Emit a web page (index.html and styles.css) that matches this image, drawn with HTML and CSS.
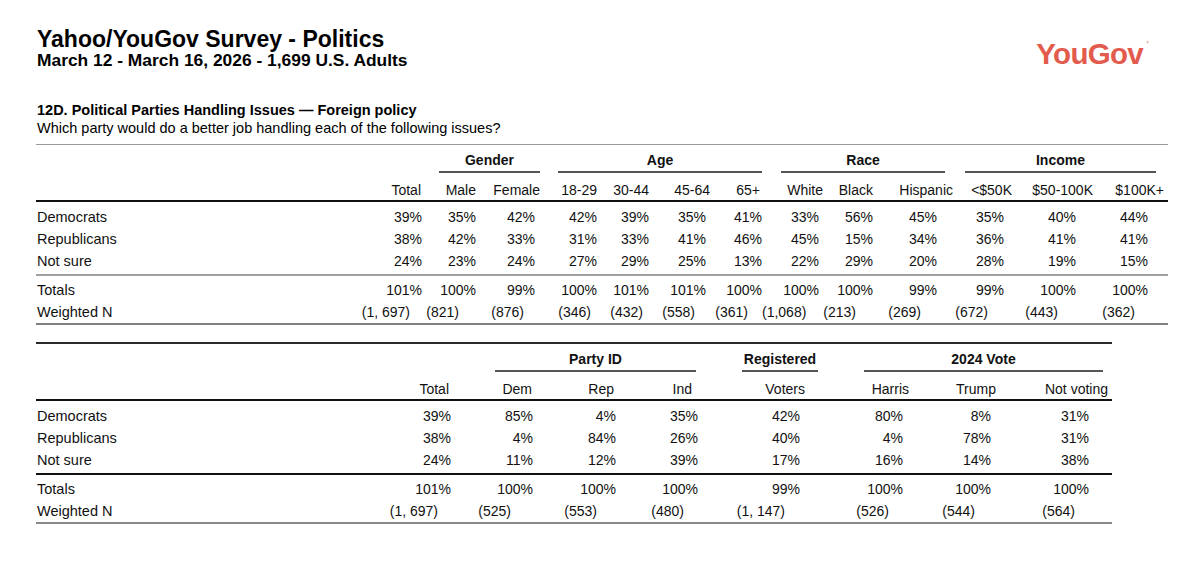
FILE: index.html
```html
<!DOCTYPE html>
<html lang="en">
<head>
<meta charset="utf-8">
<title>Yahoo/YouGov Survey - Politics</title>
<link rel="stylesheet" href="styles.css">
</head>
<body>
<div class="page">
  <header class="top">
    <div class="titles">
      <h1 class="title">Yahoo/YouGov Survey - Politics</h1>
      <h2 class="subtitle">March 12 - March 16, 2026 - 1,699 U.S. Adults</h2>
    </div>
    <div class="logo">YouGov<span class="mark">'</span></div>
  </header>

  <section class="question">
    <h3>12D. Political Parties Handling Issues — Foreign policy</h3>
    <p>Which party would do a better job handling each of the following issues?</p>
  </section>

  <div class="tbl t1">
    <div class="row groups">
      <div class="span2"></div>
      <div class="grp span2 g-gender">Gender</div>
      <div class="grp span4 g-age">Age</div>
      <div class="grp span3 g-race">Race</div>
      <div class="grp span3 g-income">Income</div>
    </div>
    <div class="row hdr">
      <div></div><div>Total</div><div>Male</div><div>Female</div><div>18-29</div><div>30-44</div><div>45-64</div><div>65+</div><div>White</div><div>Black</div><div>Hispanic</div><div>&lt;$50K</div><div>$50-100K</div><div>$100K+</div>
    </div>
    <div class="body">
      <div class="row r"><div>Democrats</div><div>39%</div><div>35%</div><div>42%</div><div>42%</div><div>39%</div><div>35%</div><div>41%</div><div>33%</div><div>56%</div><div>45%</div><div>35%</div><div>40%</div><div>44%</div></div>
      <div class="row r"><div>Republicans</div><div>38%</div><div>42%</div><div>33%</div><div>31%</div><div>33%</div><div>41%</div><div>46%</div><div>45%</div><div>15%</div><div>34%</div><div>36%</div><div>41%</div><div>41%</div></div>
      <div class="row r"><div>Not sure</div><div>24%</div><div>23%</div><div>24%</div><div>27%</div><div>29%</div><div>25%</div><div>13%</div><div>22%</div><div>29%</div><div>20%</div><div>28%</div><div>19%</div><div>15%</div></div>
    </div>
    <div class="foot">
      <div class="row r"><div>Totals</div><div>101%</div><div>100%</div><div>99%</div><div>100%</div><div>101%</div><div>101%</div><div>100%</div><div>100%</div><div>100%</div><div>99%</div><div>99%</div><div>100%</div><div>100%</div></div>
      <div class="row r wn"><div>Weighted N</div><div>(1, 697)</div><div>(821)</div><div>(876)</div><div>(346)</div><div>(432)</div><div>(558)</div><div>(361)</div><div>(1,068)</div><div>(213)</div><div>(269)</div><div>(672)</div><div>(443)</div><div>(362)</div></div>
    </div>
  </div>

  <div class="tbl t2">
    <div class="row groups">
      <div class="span2"></div>
      <div class="grp span3 g-party">Party ID</div>
      <div class="grp g-reg">Registered</div>
      <div class="grp span3 g-vote">2024 Vote</div>
    </div>
    <div class="row hdr">
      <div></div><div>Total</div><div>Dem</div><div>Rep</div><div>Ind</div><div>Voters</div><div>Harris</div><div>Trump</div><div>Not voting</div>
    </div>
    <div class="body">
      <div class="row r"><div>Democrats</div><div>39%</div><div>85%</div><div>4%</div><div>35%</div><div>42%</div><div>80%</div><div>8%</div><div>31%</div></div>
      <div class="row r"><div>Republicans</div><div>38%</div><div>4%</div><div>84%</div><div>26%</div><div>40%</div><div>4%</div><div>78%</div><div>31%</div></div>
      <div class="row r"><div>Not sure</div><div>24%</div><div>11%</div><div>12%</div><div>39%</div><div>17%</div><div>16%</div><div>14%</div><div>38%</div></div>
    </div>
    <div class="foot">
      <div class="row r"><div>Totals</div><div>101%</div><div>100%</div><div>100%</div><div>100%</div><div>99%</div><div>100%</div><div>100%</div><div>100%</div></div>
      <div class="row r wn"><div>Weighted N</div><div>(1, 697)</div><div>(525)</div><div>(553)</div><div>(480)</div><div>(1, 147)</div><div>(526)</div><div>(544)</div><div>(564)</div></div>
    </div>
  </div>
</div>
</body>
</html>
```
FILE: styles.css
```css
* { box-sizing: border-box; margin: 0; padding: 0; }

body {
  margin: 0;
  background: #fff;
  color: #111;
  font-family: "Liberation Sans", Arial, sans-serif;
}

.page {
  width: 1168px;
  padding-left: 36px;
}

/* ---------- header ---------- */
.top {
  display: flex;
  justify-content: space-between;
  align-items: flex-start;
  padding-top: 27px;
}
.title {
  font-size: 23px;
  line-height: 24px;
  font-weight: 700;
  color: #000;
  padding-left: 1px;
}
.subtitle {
  font-size: 17.4px;
  line-height: 19px;
  font-weight: 700;
  color: #000;
  padding-left: 1px;
}
.logo {
  position: relative;
  font-size: 29.5px;
  line-height: 29px;
  font-weight: 700;
  color: #e35b4d;
  letter-spacing: -0.7px;
  margin-top: 12px;
  margin-right: 25px;
}
.logo .mark {
  position: absolute;
  right: -5px;
  top: 1px;
  font-size: 9px;
  line-height: 9px;
  color: #e8958c;
}

/* ---------- question ---------- */
.question {
  margin-top: 31px;
  padding-left: 1px;
  font-size: 14.5px;
  line-height: 18px;
  color: #000;
}
.question h3 {
  font-size: 14.5px;
  font-weight: 700;
}

/* ---------- tables ---------- */
.tbl {
  font-size: 14px;
}
.t1 {
  --cols: 324px 62px 55px 64px 57px 52px 61px 51px 61px 51px 79px 60px 81px 74px;
  width: 1132px;
  margin-top: 7px;
  border-top: 1px solid #9a9a9a;
}
.t2 {
  --cols: 344px 72px 82px 83px 82px 107px 104px 87px 115px;
  width: 1076px;
  margin-top: 17px;
  border-top: 2px solid #2a2a2a;
}

.row {
  display: grid;
  grid-template-columns: var(--cols);
}
.row > div {
  white-space: nowrap;
}
.row > div:first-child {
  padding-left: 1px;
}
.r > div:first-child {
  font-size: 14.5px;
}

.span2 { grid-column: span 2; }
.span3 { grid-column: span 3; }
.span4 { grid-column: span 4; }

.groups {
  padding-top: 6px;
}
.grp {
  font-weight: 700;
  text-align: center;
  line-height: 18px;
  padding-bottom: 2px;
  border-bottom: 2px solid #555;
}
.g-gender { margin: 0 1px 0 17px; }
.g-age    { margin: 0 0 0 17px; }
.g-race   { margin: 0 8px 0 19px; }
.g-income { margin: 0 12px 0 12px; }
.g-party  { margin: 0 3px 0 43px; }
.g-reg    { margin: 0 -12px 0 43px; }
.g-vote   { margin: 0 9px 0 58px; }

.hdr {
  padding-top: 8px;
  padding-bottom: 1px;
  line-height: 18px;
  border-bottom: 2px solid #111;
}
.hdr > div:not(:first-child) {
  text-align: right;
  padding-right: var(--h);
}

.body {
  padding-top: 4px;
  padding-bottom: 2px;
}
.t1 .body { border-bottom: 2px solid #a0a0a0; }
.t2 .body { border-bottom: 2px solid #111; }

.foot {
  padding-top: 3px;
}
.t1 .foot { border-bottom: 2px solid #808080; }
.t2 .foot { border-bottom: 2px solid #8a8a8a; }

.r {
  line-height: 22px;
}
.r > div:not(:first-child) {
  text-align: right;
  padding-right: var(--d);
}
.r.wn > div:not(:first-child) {
  padding-right: var(--n);
}

/* per-column offsets, table 1 */
.t1 .row > :nth-child(2)  { --d: 0px;  --n: 12px; --h: 1px; }
.t1 .row > :nth-child(3)  { --d: 1px;  --n: 18px; --h: 1px; }
.t1 .row > :nth-child(4)  { --d: 6px;  --n: 17px; --h: 1px; }
.t1 .row > :nth-child(5)  { --d: 1px;  --n: 7px;  --h: 1px; }
.t1 .row > :nth-child(6)  { --d: 1px;  --n: 7px;  --h: 1px; }
.t1 .row > :nth-child(7)  { --d: 5px;  --n: 16px; --h: 1px; }
.t1 .row > :nth-child(8)  { --d: 0px;  --n: 14px; --h: 2px; }
.t1 .row > :nth-child(9)  { --d: 4px;  --n: 21px; --h: 0px; }
.t1 .row > :nth-child(10) { --d: 1px;  --n: 18px; --h: 1px; }
.t1 .row > :nth-child(11) { --d: 16px; --n: 32px; --h: 0px; }
.t1 .row > :nth-child(12) { --d: 9px;  --n: 25px; --h: 1px; }
.t1 .row > :nth-child(13) { --d: 18px; --n: 36px; --h: 1px; }
.t1 .row > :nth-child(14) { --d: 20px; --n: 33px; --h: 4px; }

/* per-column offsets, table 2 */
.t2 .row > :nth-child(2) { --d: 1px;  --n: 14px; --h: 3px; }
.t2 .row > :nth-child(3) { --d: 1px;  --n: 23px; --h: 2px; }
.t2 .row > :nth-child(4) { --d: 1px;  --n: 20px; --h: 3px; }
.t2 .row > :nth-child(5) { --d: 1px;  --n: 15px; --h: 7px; }
.t2 .row > :nth-child(6) { --d: 6px;  --n: 21px; --h: 1px; }
.t2 .row > :nth-child(7) { --d: 7px;  --n: 21px; --h: 1px; }
.t2 .row > :nth-child(8) { --d: 6px;  --n: 22px; --h: 1px; }
.t2 .row > :nth-child(9) { --d: 23px; --n: 37px; --h: 4px; }
```
